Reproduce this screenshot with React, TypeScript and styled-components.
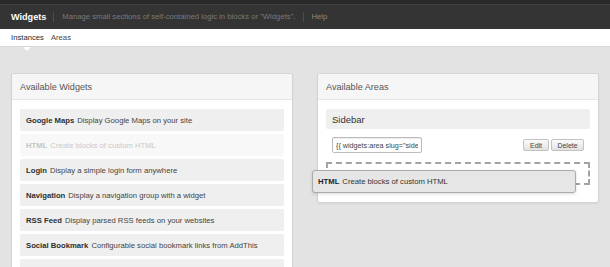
import React from 'react';
import styled, { createGlobalStyle } from 'styled-components';

const GlobalStyle = createGlobalStyle`
  *, *::before, *::after { box-sizing: border-box; }
  html, body { margin: 0; padding: 0; }
  body {
    background: #e3e3e3;
    font-family: "Liberation Sans", Arial, Helvetica, sans-serif;
    color: #333;
  }
`;

const TopBar = styled.header`
  height: 29px;
  border-top: 4px solid #292929;
  background: #343434;
  box-shadow: inset 0 1px 0 #3e3e3e;
  display: flex;
  align-items: center;
  padding: 0 11px;
`;

const Title = styled.h1`
  margin: 0;
  font-size: 9.1px;
  font-weight: bold;
  color: #fff;
`;

const Divider = styled.span`
  width: 1px;
  height: 10px;
  background: #4c4c4c;
  margin: 0 8px 0 7px;
`;

const Tagline = styled.span`
  font-size: 7.7px;
  color: #7a7a7a;
`;

const HelpLink = styled.a`
  font-size: 7.7px;
  color: #8a8a8a;
`;

const SubNav = styled.nav`
  height: 18px;
  background: #fff;
  border-bottom: 1px solid #d6d6d6;
  display: flex;
  align-items: center;
  gap: 7px;
  padding: 0 11px;
`;

const Tab = styled.a<{ $active?: boolean }>`
  position: relative;
  font-size: 7.7px;
  color: ${(p) => (p.$active ? '#2c2c2c' : '#4a4a4a')};

  &::after {
    content: '';
    display: ${(p) => (p.$active ? 'block' : 'none')};
    position: absolute;
    left: 50%;
    bottom: -9px;
    margin-left: -4px;
    border: 4px solid transparent;
    border-top-color: #fff;
    border-bottom: 0;
  }
`;

const Main = styled.main`
  display: grid;
  grid-template-columns: 282px 282px;
  column-gap: 24px;
  align-items: start;
  padding: 26px 11px 0;
`;

const Panel = styled.section`
  background: #fff;
  border: 1px solid #d4d4d4;
  border-radius: 3px;
  box-shadow: 0 1px 2px rgba(0, 0, 0, 0.06);
`;

const PanelHeader = styled.h2`
  margin: 0;
  height: 26px;
  display: flex;
  align-items: center;
  padding: 0 8px;
  font-size: 9.1px;
  font-weight: normal;
  color: #555;
  background: #f6f6f6;
  border-bottom: 1px solid #e6e6e6;
  border-radius: 3px 3px 0 0;
`;

const PanelBody = styled.div<{ $bottom?: number }>`
  padding: 9px 8px ${(p) => p.$bottom ?? 8}px;
`;

const WidgetRow = styled.div<{ $faded?: boolean }>`
  height: 22px;
  display: flex;
  align-items: center;
  padding: 0 6px;
  margin-bottom: 3px;
  border-radius: 2px;
  font-size: 7.7px;
  background: ${(p) => (p.$faded ? '#f8f8f8' : '#efefef')};
  color: ${(p) => (p.$faded ? '#c9c9c9' : '#444')};

  b {
    color: ${(p) => (p.$faded ? '#c4c4c4' : '#2e2e2e')};
    margin-right: 3px;
  }
`;

const AreaRow = styled.div`
  height: 20px;
  display: flex;
  align-items: center;
  padding: 0 6px;
  background: #efefef;
  border-radius: 2px;
  font-size: 9.5px;
  color: #333;
`;

const AreaControls = styled.div`
  margin-top: 8px;
  display: flex;
  align-items: center;
  justify-content: space-between;
  padding: 0 6px;
`;

const TagInput = styled.input`
  width: 90px;
  height: 16px;
  padding: 0 3px;
  border: 1px solid #bcbcbc;
  border-radius: 2px;
  box-shadow: inset 0 1px 1px rgba(0, 0, 0, 0.08);
  font-family: inherit;
  font-size: 7.2px;
  color: #444;
  outline: none;
`;

const ButtonGroup = styled.div`
  display: flex;
  gap: 2px;
`;

const SmallButton = styled.button<{ $width: number }>`
  width: ${(p) => p.$width}px;
  height: 12px;
  padding: 0;
  border: 1px solid #c2c2c2;
  border-radius: 2px;
  background: linear-gradient(#fafafa, #e2e2e2);
  font-family: inherit;
  font-size: 7px;
  color: #444;
`;

const DropZone = styled.div`
  position: relative;
  margin-top: 9px;
  height: 23px;
  border: 2px dashed #a3a3a3;
`;

const DragHelper = styled.div`
  position: absolute;
  left: -16px;
  top: 6px;
  width: 264px;
  height: 23px;
  display: flex;
  align-items: center;
  padding: 0 5px;
  background: #e6e6e6;
  border: 1px solid #ababab;
  border-radius: 3px;
  box-shadow: 0 1px 3px rgba(0, 0, 0, 0.15);
  font-size: 7.7px;
  color: #333;

  b {
    color: #1e1e1e;
    margin-right: 3px;
  }
`;

const widgets = [
  { name: 'Google Maps', desc: 'Display Google Maps on your site' },
  { name: 'HTML', desc: 'Create blocks of custom HTML', faded: true },
  { name: 'Login', desc: 'Display a simple login form anywhere' },
  { name: 'Navigation', desc: 'Display a navigation group with a widget' },
  { name: 'RSS Feed', desc: 'Display parsed RSS feeds on your websites' },
  { name: 'Social Bookmark', desc: 'Configurable social bookmark links from AddThis' },
  { name: '', desc: '' },
];

const App: React.FC = () => {
  return (
    <>
      <GlobalStyle />
      <TopBar>
        <Title>Widgets</Title>
        <Divider />
        <Tagline>Manage small sections of self-contained logic in blocks or "Widgets".</Tagline>
        <Divider />
        <HelpLink>Help</HelpLink>
      </TopBar>
      <SubNav>
        <Tab $active>Instances</Tab>
        <Tab>Areas</Tab>
      </SubNav>
      <Main>
        <Panel>
          <PanelHeader>Available Widgets</PanelHeader>
          <PanelBody>
            {widgets.map((w, i) => (
              <WidgetRow key={i} $faded={w.faded}>
                {w.name && <b>{w.name}</b>}
                {w.desc}
              </WidgetRow>
            ))}
          </PanelBody>
        </Panel>
        <Panel>
          <PanelHeader>Available Areas</PanelHeader>
          <PanelBody $bottom={17}>
            <AreaRow>Sidebar</AreaRow>
            <AreaControls>
              <TagInput readOnly value={'{{ widgets:area slug="sidebar" }}'} />
              <ButtonGroup>
                <SmallButton $width={26}>Edit</SmallButton>
                <SmallButton $width={33}>Delete</SmallButton>
              </ButtonGroup>
            </AreaControls>
            <DropZone>
              <DragHelper>
                <b>HTML</b>
                Create blocks of custom HTML
              </DragHelper>
            </DropZone>
          </PanelBody>
        </Panel>
      </Main>
    </>
  );
};

export default App;
